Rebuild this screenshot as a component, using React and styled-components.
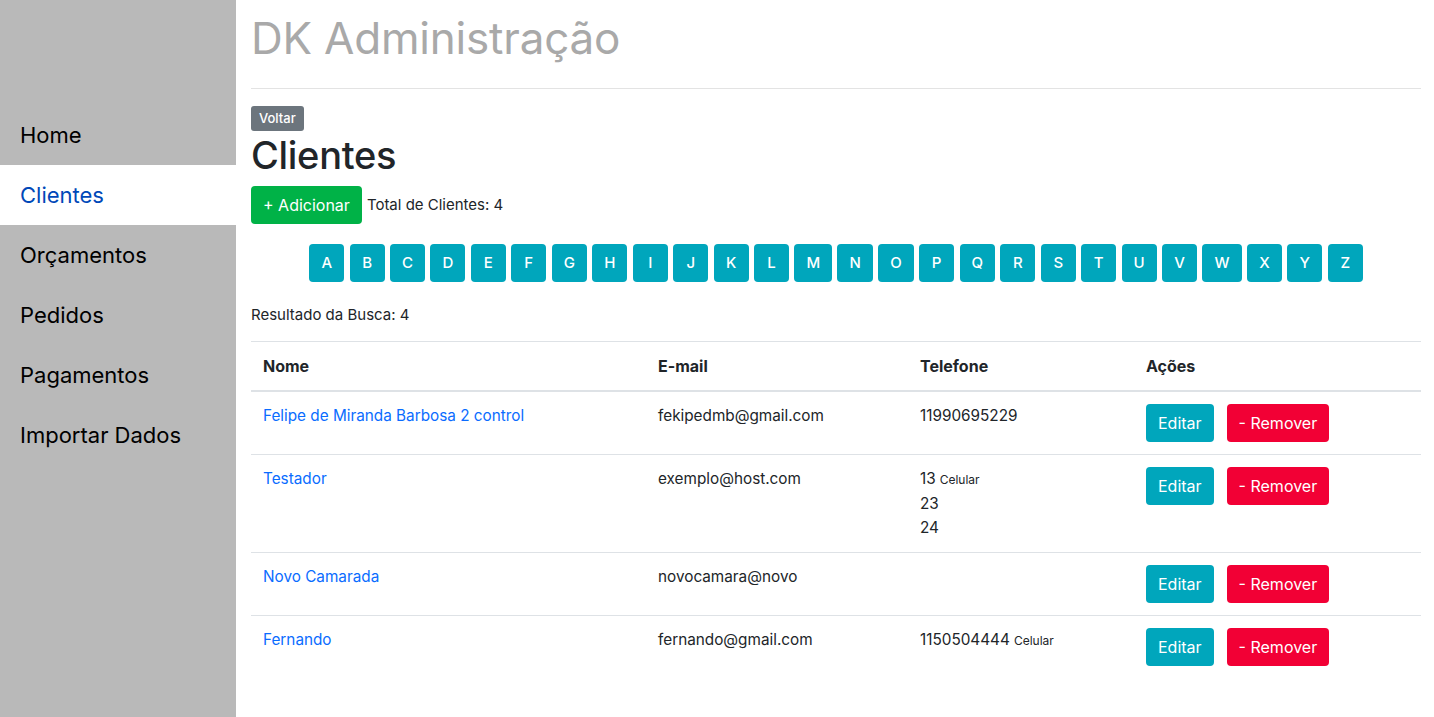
import React from "react";
import styled, { createGlobalStyle } from "styled-components";

const GlobalStyle = createGlobalStyle`
  * { box-sizing: border-box; }
  html, body { margin: 0; padding: 0; background: #fff; }
  body {
    font-family: Inter, "Liberation Sans", Arial, sans-serif;
    font-size: 16px;
    line-height: 24px;
    color: #212529;
  }
`;

const Layout = styled.div`
  display: flex;
  min-height: 100vh;
`;

const Sidebar = styled.nav`
  width: 236px;
  flex: 0 0 236px;
  background: #b9b9b9;
  padding-top: 105px;
  display: flex;
  flex-direction: column;
`;

const NavItem = styled.a`
  display: flex;
  align-items: center;
  height: 60px;
  padding: 0 20px;
  font-size: 22px;
  color: ${(p) => (p.$active ? "#0048b8" : "#000")};
  background: ${(p) => (p.$active ? "#fff" : "transparent")};
  text-decoration: none;
`;

const Main = styled.main`
  flex: 1;
  padding: 0 13px 30px 15px;
`;

const Title = styled.h1`
  margin: 9px 0 0;
  font-size: 44px;
  line-height: 58px;
  font-weight: 400;
  color: #a9a9a9;
  letter-spacing: -0.2px;
`;

const Rule = styled.hr`
  margin: 21px 0 16px;
  border: 0;
  border-top: 1px solid #e3e3e3;
`;

const Button = styled.button`
  display: inline-flex;
  align-items: center;
  justify-content: center;
  font-family: inherit;
  font-size: ${(p) => (p.$small ? "13px" : "16px")};
  line-height: ${(p) => (p.$small ? "17px" : "24px")};
  padding: ${(p) => (p.$small ? "4px 8px" : "7px 12px")};
  border: 0;
  border-radius: ${(p) => (p.$small ? "3px" : "4px")};
  color: #fff;
  font-weight: ${(p) => (p.$small ? 500 : 400)};
  background: ${(p) =>
    ({
      secondary: "#6c757d",
      success: "#00b247",
      info: "#00a6bc",
      danger: "#f20035",
    }[p.$variant])};
  cursor: pointer;
  white-space: nowrap;
`;

const PageHeading = styled.h2`
  margin: 0 0 7px;
  font-size: 38px;
  line-height: 48px;
  font-weight: 500;
  letter-spacing: -0.3px;
  color: #212529;
`;

const ActionRow = styled.div`
  display: flex;
  align-items: center;
  gap: 5px;
`;

const Total = styled.span`
  font-size: 15px;
`;

const Letters = styled.div`
  display: flex;
  justify-content: center;
  gap: 5.4px;
  margin: 20px 0 21px;
`;

const LetterButton = styled(Button)`
  min-width: 35px;
  font-size: 15px;
  font-weight: 500;
`;

const Result = styled.p`
  margin: 0 0 14px;
  font-size: 15px;
`;

const Table = styled.table`
  width: 100%;
  border-collapse: collapse;
`;

const Th = styled.th`
  text-align: left;
  font-weight: 700;
  padding: 12px;
  border-top: 1px solid #dee2e6;
  border-bottom: 2px solid #dee2e6;
  vertical-align: bottom;
  width: ${(p) => p.$w || "auto"};
`;

const Td = styled.td`
  padding: 12px;
  border-top: 1px solid #dee2e6;
  vertical-align: top;
  font-size: 15.3px;
`;

const NameLink = styled.a`
  color: #0a6cff;
  text-decoration: none;
`;

const PhoneLine = styled.div``;

const Small = styled.small`
  font-size: 12px;
  margin-left: 4px;
`;

const Actions = styled.div`
  display: flex;
  gap: 13px;
`;

const navItems = ["Home", "Clientes", "Orçamentos", "Pedidos", "Pagamentos", "Importar Dados"];
const letters = "ABCDEFGHIJKLMNOPQRSTUVWXYZ".split("");

const clients = [
  {
    name: "Felipe de Miranda Barbosa 2 control",
    email: "fekipedmb@gmail.com",
    phones: [{ n: "11990695229" }],
  },
  {
    name: "Testador",
    email: "exemplo@host.com",
    phones: [{ n: "13", t: "Celular" }, { n: "23" }, { n: "24" }],
  },
  { name: "Novo Camarada", email: "novocamara@novo", phones: [] },
  {
    name: "Fernando",
    email: "fernando@gmail.com",
    phones: [{ n: "1150504444", t: "Celular" }],
  },
];

export default function App() {
  return (
    <>
      <GlobalStyle />
      <Layout>
        <Sidebar>
          {navItems.map((item) => (
            <NavItem key={item} href="#" $active={item === "Clientes"}>
              {item}
            </NavItem>
          ))}
        </Sidebar>
        <Main>
          <Title>DK Administração</Title>
          <Rule />
          <Button $small $variant="secondary">Voltar</Button>
          <PageHeading>Clientes</PageHeading>
          <ActionRow>
            <Button $variant="success">+ Adicionar</Button>
            <Total>Total de Clientes: 4</Total>
          </ActionRow>
          <Letters>
            {letters.map((l) => (
              <LetterButton key={l} $variant="info">
                {l}
              </LetterButton>
            ))}
          </Letters>
          <Result>Resultado da Busca: 4</Result>
          <Table>
            <thead>
              <tr>
                <Th $w="395px">Nome</Th>
                <Th $w="262px">E-mail</Th>
                <Th $w="226px">Telefone</Th>
                <Th>Ações</Th>
              </tr>
            </thead>
            <tbody>
              {clients.map((c) => (
                <tr key={c.name}>
                  <Td>
                    <NameLink href="#">{c.name}</NameLink>
                  </Td>
                  <Td>{c.email}</Td>
                  <Td>
                    {c.phones.map((p, i) => (
                      <PhoneLine key={i}>
                        {p.n}
                        {p.t && <Small>{p.t}</Small>}
                      </PhoneLine>
                    ))}
                  </Td>
                  <Td>
                    <Actions>
                      <Button $variant="info">Editar</Button>
                      <Button $variant="danger">- Remover</Button>
                    </Actions>
                  </Td>
                </tr>
              ))}
            </tbody>
          </Table>
        </Main>
      </Layout>
    </>
  );
}
